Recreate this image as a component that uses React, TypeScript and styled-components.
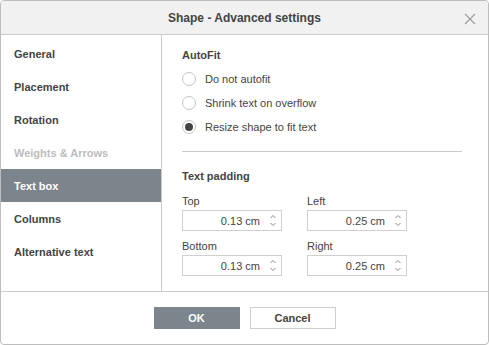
import React from "react";
import styled, { createGlobalStyle } from "styled-components";

const Global = createGlobalStyle`
  html, body { margin: 0; padding: 0; background: #fff; }
  body { font-family: Arial, "Liberation Sans", Helvetica, sans-serif; font-size: 11px; color: #444; }
  * { box-sizing: border-box; }
`;

const Dialog = styled.div`
  width: 489px;
  height: 345px;
  border: 1px solid #bdbdbd;
  border-radius: 4px;
  overflow: hidden;
  display: flex;
  flex-direction: column;
  background: #fff;
`;

const Header = styled.div`
  height: 34px;
  flex: none;
  background: #f1f1f1;
  border-bottom: 1px solid #cbcbcb;
  display: flex;
  align-items: center;
  justify-content: center;
  position: relative;
`;

const Title = styled.div`
  font-weight: bold;
  font-size: 12px;
  color: #444;
  padding-top: 1px;
`;

const Close = styled.button`
  position: absolute;
  right: 12px;
  top: 12px;
  width: 12px;
  height: 12px;
  padding: 0;
  border: none;
  background: none;
  display: flex;
`;

const Body = styled.div`
  height: 257px;
  flex: none;
  border-bottom: 1px solid #cbcbcb;
  display: flex;
`;

const Sidebar = styled.div`
  width: 161px;
  flex: none;
  border-right: 1px solid #cbcbcb;
  padding-top: 2px;
  display: flex;
  flex-direction: column;
`;

const NavItem = styled.div<{ $active?: boolean; $disabled?: boolean }>`
  height: 33px;
  display: flex;
  align-items: center;
  padding-left: 13px;
  font-weight: bold;
  font-size: 11px;
  color: ${(p) => (p.$active ? "#fff" : p.$disabled ? "#bcbcbc" : "#444")};
  background: ${(p) => (p.$active ? "#7d858c" : "transparent")};
`;

const Content = styled.div`
  flex: 1;
  padding: 13px 0 0 20px;
  display: flex;
  flex-direction: column;
`;

const SectionTitle = styled.div`
  font-weight: bold;
  font-size: 11px;
  color: #444;
  height: 14px;
  line-height: 14px;
`;

const RadioList = styled.div`
  margin-top: 5px;
  display: flex;
  flex-direction: column;
`;

const RadioRow = styled.label`
  height: 24px;
  display: flex;
  align-items: center;
  gap: 9px;
  font-size: 11px;
  color: #444;
`;

const RadioCircle = styled.span<{ $checked?: boolean }>`
  width: 14px;
  height: 14px;
  border-radius: 50%;
  border: 1px solid #c4c4c4;
  background: #fff;
  display: flex;
  align-items: center;
  justify-content: center;
  flex: none;
  &::after {
    content: "";
    width: 8px;
    height: 8px;
    border-radius: 50%;
    background: ${(p) => (p.$checked ? "#444" : "transparent")};
  }
`;

const Separator = styled.div`
  width: 280px;
  height: 1px;
  background: #cbcbcb;
  margin-top: 12px;
  margin-bottom: 17px;
`;

const Grid = styled.div`
  margin-top: 11px;
  display: grid;
  grid-template-columns: 100px 100px;
  column-gap: 25px;
  row-gap: 8px;
`;

const Field = styled.div`
  display: flex;
  flex-direction: column;
`;

const FieldLabel = styled.div`
  font-size: 11px;
  color: #444;
  height: 14px;
  line-height: 14px;
  margin-bottom: 2px;
`;

const Spinner = styled.div`
  width: 100px;
  height: 21px;
  border: 1px solid #cfcfcf;
  display: flex;
  align-items: center;
  justify-content: flex-end;
`;

const Value = styled.span`
  font-size: 11px;
  color: #444;
  padding-right: 5px;
`;

const Arrows = styled.div`
  width: 16px;
  height: 19px;
  display: flex;
  flex-direction: column;
  align-items: center;
  justify-content: center;
  gap: 5px;
`;

const Footer = styled.div`
  flex: 1;
  display: flex;
  justify-content: center;
  gap: 10px;
  padding-top: 15px;
`;

const Button = styled.button<{ $primary?: boolean }>`
  width: 86px;
  height: 22px;
  font-family: Arial, "Liberation Sans", Helvetica, sans-serif;
  font-size: 11px;
  font-weight: bold;
  border: 1px solid ${(p) => (p.$primary ? "#7d858c" : "#cfcfcf")};
  background: ${(p) => (p.$primary ? "#7d858c" : "#fff")};
  color: ${(p) => (p.$primary ? "#fff" : "#444")};
  padding: 0;
`;

const Chevron = ({ up }: { up?: boolean }) => (
  <svg width="6" height="3" viewBox="0 0 6 3">
    <path
      d={up ? "M0.5 3 L3 0.5 L5.5 3" : "M0.5 0 L3 2.5 L5.5 0"}
      fill="none"
      stroke="#8a8a8a"
      strokeWidth="1"
    />
  </svg>
);

const SpinField = ({ label, value }: { label: string; value: string }) => (
  <Field>
    <FieldLabel>{label}</FieldLabel>
    <Spinner>
      <Value>{value}</Value>
      <Arrows>
        <Chevron up />
        <Chevron />
      </Arrows>
    </Spinner>
  </Field>
);

const navItems = [
  { label: "General" },
  { label: "Placement" },
  { label: "Rotation" },
  { label: "Weights & Arrows", disabled: true },
  { label: "Text box", active: true },
  { label: "Columns" },
  { label: "Alternative text" },
];

export default function App() {
  return (
    <>
      <Global />
      <Dialog>
        <Header>
          <Title>Shape - Advanced settings</Title>
          <Close aria-label="Close">
            <svg width="12" height="12" viewBox="0 0 12 12">
              <path d="M1 1 L11 11 M11 1 L1 11" stroke="#9a9a9a" strokeWidth="1.1" fill="none" />
            </svg>
          </Close>
        </Header>
        <Body>
          <Sidebar>
            {navItems.map((n) => (
              <NavItem key={n.label} $active={n.active} $disabled={n.disabled}>
                {n.label}
              </NavItem>
            ))}
          </Sidebar>
          <Content>
            <SectionTitle>AutoFit</SectionTitle>
            <RadioList>
              <RadioRow>
                <RadioCircle />
                Do not autofit
              </RadioRow>
              <RadioRow>
                <RadioCircle />
                Shrink text on overflow
              </RadioRow>
              <RadioRow>
                <RadioCircle $checked />
                Resize shape to fit text
              </RadioRow>
            </RadioList>
            <Separator />
            <SectionTitle>Text padding</SectionTitle>
            <Grid>
              <SpinField label="Top" value="0.13 cm" />
              <SpinField label="Left" value="0.25 cm" />
              <SpinField label="Bottom" value="0.13 cm" />
              <SpinField label="Right" value="0.25 cm" />
            </Grid>
          </Content>
        </Body>
        <Footer>
          <Button $primary>OK</Button>
          <Button>Cancel</Button>
        </Footer>
      </Dialog>
    </>
  );
}
